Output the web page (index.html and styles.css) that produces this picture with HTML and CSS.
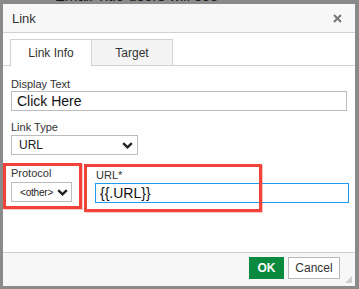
FILE: index.html
```html
<!DOCTYPE html>
<html>
<head>
<meta charset="utf-8">
<link rel="stylesheet" href="styles.css">
</head>
<body>
<div class="page-text">Email Title users will see <span class="req">*</span></div>
<div class="dialog">
  <div class="hdr">
    <span class="title">Link</span>
    <svg class="close" width="9" height="9" viewBox="0 0 9 9"><path d="M1 1L8 8M8 1L1 8" stroke="#777" stroke-width="2"/></svg>
  </div>
  <div class="tabs">
    <div class="tab active">Link Info</div>
    <div class="tab">Target</div>
  </div>
  <div class="panel">
    <div class="field">
      <div class="lbl">Display Text</div>
      <div class="input wide">Click Here</div>
    </div>
    <div class="field gap10">
      <div class="lbl">Link Type</div>
      <div class="select type">URL<svg class="chev" width="11" height="7" viewBox="0 0 11 7"><path d="M1.2 1.2L5.5 5.3L9.8 1.2" fill="none" stroke="#222" stroke-width="2.4"/></svg></div>
    </div>
    <div class="row">
      <div class="field proto">
        <div class="lbl">Protocol</div>
        <div class="select small"><span class="opt">&lt;other&gt;</span><svg class="chev" width="11" height="7" viewBox="0 0 11 7"><path d="M1.2 1.2L5.5 5.3L9.8 1.2" fill="none" stroke="#222" stroke-width="2.4"/></svg></div>
      </div>
      <div class="field url">
        <div class="lbl">URL*</div>
        <div class="input focus">{{.URL}}</div>
      </div>
    </div>
  </div>
  <div class="footer">
    <div class="btn ok">OK</div>
    <div class="btn cancel">Cancel</div>
  </div>
  <div class="mark mark-proto"></div>
  <div class="mark mark-url"></div>
  <div class="grip"></div>
</div>
</body>
</html>
```
FILE: styles.css
```css
html, body {
  margin: 0;
  padding: 0;
}
body {
  width: 359px;
  height: 289px;
  overflow: hidden;
  background: #8a8a8a;
  font-family: "Liberation Sans", Arial, sans-serif;
  position: relative;
}
.page-text {
  position: absolute;
  left: 55px;
  top: -13px;
  font-size: 15px;
  color: #1a1a1a;
  white-space: nowrap;
}
.page-text .req { color: #c0392b; }
.dialog {
  position: relative;
  margin: 4px 0 0 3px;
  width: 352px;
  height: 282px;
  background: #fefefe;
  display: flex;
  flex-direction: column;
}
.hdr {
  height: 28px;
  background: #f7f7f7;
  border-bottom: 1px solid #d1d1d1;
  display: flex;
  align-items: center;
  justify-content: space-between;
  padding: 0 13px 0 9px;
  flex-shrink: 0;
}
.title {
  font-size: 13px;
  color: #333;
  margin-top: 1px;
}
.close { display: block; margin-top: 1px; }
.tabs {
  margin-top: 6px;
  display: flex;
  align-items: flex-start;
  padding-left: 7px;
  border-bottom: 1px solid #d1d1d1;
  height: 26px;
  flex-shrink: 0;
}
.tab {
  box-sizing: border-box;
  width: 82px;
  height: 26px;
  border: 1px solid #d1d1d1;
  border-bottom: none;
  background: #f4f4f4;
  font-size: 12px;
  color: #333;
  display: flex;
  align-items: center;
  justify-content: center;
  padding-top: 1px;
}
.tab + .tab { margin-left: -1px; }
.tab.active {
  background: #fefefe;
  height: 27px;
  padding-bottom: 1px;
  position: relative;
  z-index: 1;
}
.panel {
  flex: 1;
  padding: 12px 0 0 8px;
}
.field { display: flex; flex-direction: column; }
.gap10 { margin-top: 10px; }
.lbl {
  font-size: 11px;
  line-height: 13px;
  color: #333;
}
.input {
  box-sizing: border-box;
  height: 20px;
  border: 1px solid #bcbcbc;
  background: #fff;
  font-size: 14px;
  line-height: 18px;
  padding-left: 5px;
  color: #111;
}
.input.wide { width: 336px; }
.select {
  box-sizing: border-box;
  height: 20px;
  border: 1px solid #bcbcbc;
  background: #fff;
  display: flex;
  align-items: center;
  justify-content: space-between;
  color: #222;
}
.select.type {
  width: 127px;
  margin-top: 1px;
  font-size: 12px;
  padding: 0 4px 0 7px;
}
.select.small {
  width: 61px;
  margin-top: 2px;
  font-size: 10px;
  padding: 0 3px 0 8px;
}
.opt { letter-spacing: -0.2px; }
.chev { display: block; margin-top: 1px; }
.row {
  display: flex;
  margin-top: 12px;
}
.url {
  margin-left: 23px;
  margin-top: 2px;
}
.url .lbl { padding-left: 1px; }
.input.focus {
  width: 254px;
  border-color: #1e9bf0;
  margin-top: 1px;
  padding-left: 4px;
}
.footer {
  height: 29px;
  flex-shrink: 0;
  border-top: 1px solid #d1d1d1;
  background: #f7f7f7;
  display: flex;
  justify-content: flex-end;
  align-items: flex-start;
  gap: 4px;
  padding: 4px 15px 0 0;
  box-sizing: content-box;
}
.btn {
  box-sizing: border-box;
  height: 22px;
  font-size: 12px;
  display: flex;
  align-items: center;
  justify-content: center;
}
.btn.ok {
  width: 35px;
  background: #0a8a3e;
  color: #fff;
  font-weight: bold;
}
.btn.cancel {
  width: 52px;
  background: #fff;
  border: 1px solid #b8b8b8;
  color: #333;
}
.mark {
  position: absolute;
  box-sizing: border-box;
  border: 3px solid #f2433a;
  box-shadow: 1px 1px 0 rgba(242, 67, 58, 0.3);
  z-index: 2;
}
.mark-proto {
  left: 0;
  top: 159px;
  width: 79px;
  height: 46px;
}
.mark-url {
  left: 81px;
  top: 160px;
  width: 178px;
  height: 48px;
}
.grip {
  position: absolute;
  right: 3px;
  bottom: 3px;
  width: 0;
  height: 0;
  border-left: 7px solid transparent;
  border-bottom: 7px solid #cfcfcf;
}
```
